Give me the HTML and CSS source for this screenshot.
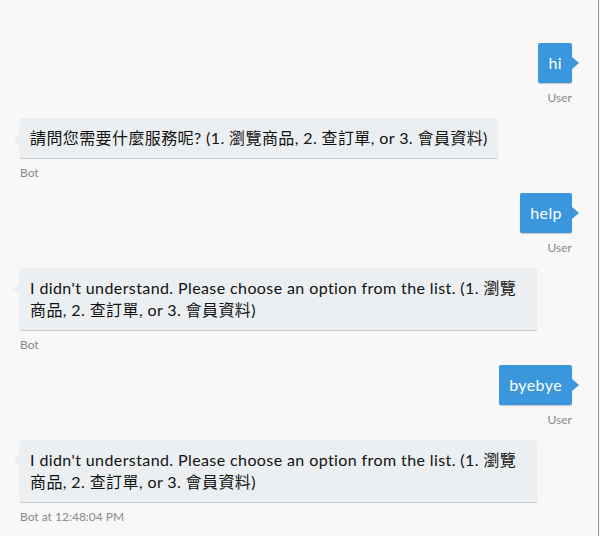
FILE: index.html
```html
<!DOCTYPE html>
<html lang="zh-Hant">
<head>
  <meta charset="UTF-8" />
  <title>Bot Chat</title>
  <link rel="stylesheet" href="styles.css">
</head>
<body>
  <div class="chat-panel">
    <div class="message from-me">
      <div class="bubble">hi</div>
      <div class="from">User</div>
    </div>

    <div class="message from-bot">
      <div class="bubble">請問您需要什麼服務呢? (1. 瀏覽商品, 2. 查訂單, or 3. 會員資料)</div>
      <div class="from">Bot</div>
    </div>

    <div class="message from-me">
      <div class="bubble">help</div>
      <div class="from">User</div>
    </div>

    <div class="message from-bot">
      <div class="bubble">I didn't understand. Please choose an option from the list. (1. 瀏覽商品, 2. 查訂單, or 3. 會員資料)</div>
      <div class="from">Bot</div>
    </div>

    <div class="message from-me">
      <div class="bubble">byebye</div>
      <div class="from">User</div>
    </div>

    <div class="message from-bot">
      <div class="bubble">I didn't understand. Please choose an option from the list. (1. 瀏覽商品, 2. 查訂單, or 3. 會員資料)</div>
      <div class="from">Bot at 12:48:04 PM</div>
    </div>
  </div>
</body>
</html>
```

FILE: styles.css
```css
html, body {
  margin: 0;
  height: 100%;
  background: #f8f8f8;
}

body {
  font-family: 'Lato', 'Noto Sans CJK TC', sans-serif;
  overflow: hidden;
}

.chat-panel {
  box-sizing: border-box;
  height: 100%;
  padding: 43px 26px 0 20px;
  border-right: 1px solid #9a9a9a;
  margin-right: 1px;
  display: flex;
  flex-direction: column;
}

.message {
  display: flex;
  flex-direction: column;
  margin-bottom: 12px;
}

.from-me {
  align-items: flex-end;
}

.from-bot {
  align-items: flex-start;
}

.bubble {
  position: relative;
  max-width: 497px;
  padding: 9px 10px;
  font-size: 16px;
  line-height: 22px;
  letter-spacing: 0.4px;
  border-radius: 2px;
  box-shadow: 0 1px 1px 0 rgba(0, 0, 0, 0.2);
}

.bubble::before {
  content: '';
  position: absolute;
  top: 14px;
  border-top: 6px solid transparent;
  border-bottom: 6px solid transparent;
}

.from-me .bubble {
  background: #3a96dd;
  color: #fff;
}

.from-me .bubble::before {
  right: -7px;
  border-left: 7px solid #3a96dd;
}

.from-bot .bubble {
  background: #eceff1;
  color: #111;
}

.from-bot .bubble::before {
  top: 15px;
  left: -7px;
  border-right: 7px solid #eceff1;
}

.from {
  margin-top: 7px;
  font-size: 12px;
  line-height: 16px;
  color: #8a8a8a;
}
```
